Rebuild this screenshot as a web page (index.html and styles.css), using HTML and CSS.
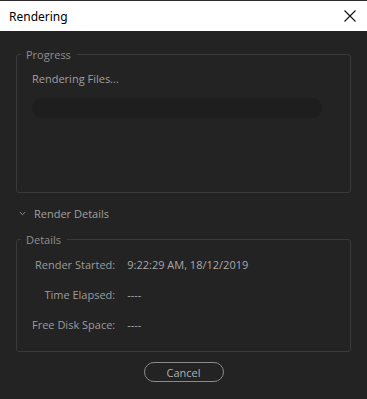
FILE: index.html
```html
<!DOCTYPE html>
<html lang="en">
<head>
  <meta charset="UTF-8">
  <meta name="viewport" content="width=device-width, initial-scale=1.0">
  <title>Rendering</title>
  <link rel="stylesheet" href="styles.css">
</head>
<body>
  <div class="dialog">
    <div class="title-bar">
      <span class="title">Rendering</span>
      <button class="close-button" aria-label="Close">
        <svg width="12" height="12" viewBox="0 0 12 12">
          <path d="M0.5 0.5 L11.5 11.5 M11.5 0.5 L0.5 11.5" stroke="#111" stroke-width="1.1" fill="none"/>
        </svg>
      </button>
    </div>

    <div class="content">
      <!-- Прогрес -->
      <fieldset class="group progress-group">
        <legend>Progress</legend>
        <div class="status">Rendering Files...</div>
        <div class="progress-bar"></div>
      </fieldset>

      <div class="toggle">
        <svg class="chevron" width="7" height="5" viewBox="0 0 7 5">
          <path d="M0.8 1 L3.5 3.7 L6.2 1" stroke="#8c8c8c" stroke-width="1" fill="none"/>
        </svg>
        <span>Render Details</span>
      </div>

      <!-- Деталі -->
      <fieldset class="group details-group">
        <legend>Details</legend>
        <div class="details">
          <span class="label">Render Started:</span>
          <span class="value">9:22:29 AM, 18/12/2019</span>
          <span class="label">Time Elapsed:</span>
          <span class="value">----</span>
          <span class="label">Free Disk Space:</span>
          <span class="value">----</span>
        </div>
      </fieldset>

      <div class="actions">
        <button class="cancel-button">Cancel</button>
      </div>
    </div>
  </div>
</body>
</html>
```

FILE: styles.css
```css
* {
  margin: 0;
  padding: 0;
  box-sizing: border-box;
}

body {
  font-family: "Open Sans", "Noto Sans", sans-serif;
  background: #232323;
  width: 367px;
  height: 399px;
  overflow: hidden;
}

.dialog {
  height: 399px;
  border-top: 1px solid #2b2b2b;
  background: #232323;
}

.title-bar {
  height: 30px;
  background: #ffffff;
  display: flex;
  align-items: center;
  justify-content: space-between;
  padding: 0 11px 0 9px;
}

.title {
  font-family: "Noto Sans", sans-serif;
  font-size: 12px;
  color: #000;
}

.close-button {
  background: none;
  border: none;
  width: 12px;
  height: 12px;
  display: flex;
}

.content {
  padding: 16px 16px 0 16px;
}

.group {
  border: 1px solid #3a3a3a;
  border-radius: 3px;
  padding: 0 15px;
}

.group legend {
  margin-left: -11px;
  padding: 0 6px 0 5px;
  font-size: 11px;
  color: #8f8f8f;
}

.progress-group {
  height: 146px;
}

.status {
  font-size: 11px;
  color: #a0a0a0;
  margin-top: 9px;
}

.progress-bar {
  margin-top: 12px;
  width: 290px;
  height: 20px;
  border-radius: 10px;
  background: #1e1e1e;
}

.toggle {
  display: flex;
  align-items: center;
  height: 18px;
  margin-top: 11px;
  font-size: 11px;
  color: #a0a0a0;
}

.chevron {
  margin-left: 3px;
  margin-right: 8px;
}

.details-group {
  margin-top: 10px;
  height: 120px;
}

.details {
  display: grid;
  grid-template-columns: max-content auto;
  column-gap: 12px;
  row-gap: 14px;
  margin-top: 10px;
  font-size: 11px;
  line-height: 16px;
  white-space: nowrap;
}

.label {
  text-align: right;
  color: #9c9c9c;
}

.value {
  color: #a8a8a8;
}

.actions {
  display: flex;
  justify-content: center;
  margin-top: 10px;
}

.cancel-button {
  width: 80px;
  height: 20px;
  border: 1px solid #8a8a8a;
  border-radius: 10px;
  background: none;
  font-family: "Open Sans", "Noto Sans", sans-serif;
  font-size: 11px;
  color: #b0b0b0;
}
```
